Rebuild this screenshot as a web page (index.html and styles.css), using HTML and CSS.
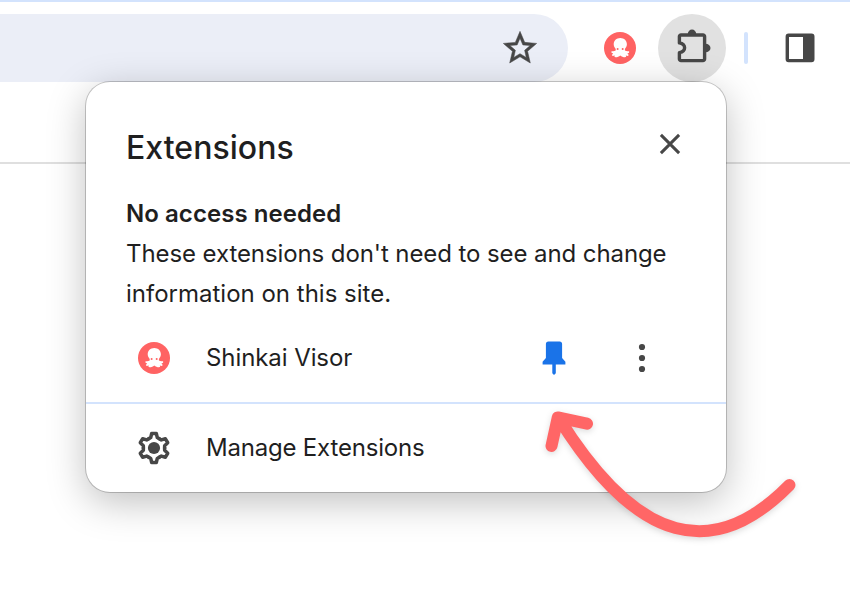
FILE: index.html
```html
<!DOCTYPE html>
<html lang="en">
<head>
<meta charset="utf-8">
<title>Extensions</title>
<link rel="stylesheet" href="styles.css">
</head>
<body>
<svg class="defs" aria-hidden="true">
  <symbol id="shinkai" viewBox="0 0 32 32">
    <circle cx="16" cy="16" r="16" fill="#ff6363"/>
    <path fill="#fff" d="M16.300 6c3.900 0 6.600 2.800 6.600 6.300 0 1.900-.8 3.300-2 4.600v1.700c1.300.8 2.500.8 4.200.6v1.500l-1.700.8 1.400 1.400-.9 1-2.100-.5.400 1.300-1.200.6c-1.900-.1-3.400-.8-4.700-1.900-1.300 1.100-2.800 1.800-4.700 1.900l-1.200-.6.4-1.300-2.100.5-.9-1 1.400-1.400-1.700-.8v-1.500c1.700.2 2.900.2 4.200-.6v-1.700c-1.200-1.300-2-2.700-2-4.600C9.700 8.800 12.400 6 16.300 6z"/>
    <circle cx="13.600" cy="17" r="1" fill="#ff6363"/><circle cx="18.700" cy="17" r="1" fill="#ff6363"/>
  </symbol>
</svg>
<div class="browser">
  <header class="toolbar">
    <div class="address">
      <svg class="star" width="40" height="40" viewBox="0 0 24 24"><path fill="#474747" stroke="#474747" stroke-width=".3" d="M22 9.240l-7.190-.620L12 2 9.190 8.630 2 9.240l5.460 4.730L5.820 21 12 17.270 18.180 21l-1.630-7.030L22 9.240zM12 15.400l-3.760 2.270 1-4.280-3.320-2.880 4.380-.38L12 6.100l1.710 4.040 4.380.38-3.320 2.880 1 4.280L12 15.400z"/></svg>
    </div>
    <svg class="ext-icon" width="32" height="32"><use href="#shinkai"/></svg>
    <div class="puzzle">
      <svg width="40" height="40" viewBox="0 0 40 40">
        <path fill="none" stroke="#474747" stroke-width="3.400" stroke-linejoin="round" d="M9 7h22a1.600 1.600 0 0 1 1.600 1.600v22.400a1.600 1.600 0 0 1-1.600 1.600H9a1.600 1.600 0 0 1-1.600-1.600v-6.300c3.300-.6 5.200-2.400 5.200-4.900s-1.900-4.300-5.200-4.900V8.600A1.600 1.600 0 0 1 9 7z"/>
        <path fill="#474747" d="M15.700 6.500a4.300 5 0 0 1 8.600 0zM33.500 15.700a5 4.300 0 0 1 0 8.600z"/>
      </svg>
    </div>
    <div class="separator"></div>
    <svg class="panel-icon" width="30" height="30" viewBox="0 0 30 30"><path fill="#474747" fill-rule="evenodd" d="M3.600.6h22.900a3 3 0 0 1 3 3v22.700a3 3 0 0 1-3 3H3.600a3 3 0 0 1-3-3V3.600a3 3 0 0 1 3-3zM4 4v22h14V4z"/></svg>
  </header>
  <div class="bookmarks"></div>
</div>

<section class="popup">
  <div class="heading">
    <h1>Extensions</h1>
    <svg width="24" height="24" viewBox="0 0 24 24"><path d="M2.900 2.900l18.200 18.200M21.100 2.900L2.900 21.100" stroke="#474747" stroke-width="3"/></svg>
  </div>
  <div class="info">
    <h2>No access needed</h2>
    <p>These extensions don't need to see and change<br><span class="line-end">information on this site.</span></p>
  </div>
  <div class="row extension">
    <svg width="32" height="32"><use href="#shinkai"/></svg>
    <span class="name">Shinkai Visor</span>
    <svg class="pin" width="24" height="34" viewBox="0 0 24 34"><path fill="#1a73e8" d="M6.400.5h11.200c1.600 0 2.500.9 2.500 2.500v14.100l3.300 3.700v2.700h-9.600v8.800L12 34l-1.700-1.700v-8.800H.6v-2.700l3.300-3.700V3C3.900 1.400 4.800.5 6.400.5z"/></svg>
    <svg class="dots" width="8" height="30" viewBox="0 0 8 30" fill="#474747"><circle cx="4" cy="4" r="3.100"/><circle cx="4" cy="15" r="3.100"/><circle cx="4" cy="26" r="3.100"/></svg>
  </div>
  <div class="row manage">
    <svg width="32" height="34" viewBox="-16 -17 32 34" fill="none" stroke="#474747" stroke-width="3.500" stroke-linejoin="round" stroke-linecap="round">
      <path id="tooth" d="M-5.300-9.200L-3.300-10.400-2.300-14.500H2.300L3.300-10.400 5.300-9.200"/>
      <use href="#tooth" transform="rotate(60)"/><use href="#tooth" transform="rotate(120)"/><use href="#tooth" transform="rotate(180)"/><use href="#tooth" transform="rotate(240)"/><use href="#tooth" transform="rotate(300)"/>
      <circle r="6.100" fill="#474747" stroke="none"/>
    </svg>
    <span class="name manage-name">Manage Extensions</span>
  </div>
</section>

<svg class="arrow" width="270" height="150" viewBox="540 400 270 150">
  <path d="M551.500 446l6.300-28.600 29.200 6.300M559 418.500C638 545 714 562 789.500 485" fill="none" stroke="#ff6666" stroke-width="12" stroke-linecap="round" stroke-linejoin="round"/>
</svg>
</body>
</html>
```
FILE: styles.css
```css
* { box-sizing: border-box; }
body {
  margin: 0;
  width: 850px;
  height: 600px;
  overflow: hidden;
  position: relative;
  background: #fff;
  color: #1f1f1f;
  font-family: Inter, "Liberation Sans", sans-serif;
}
svg { display: block; flex: none; }
.defs { position: absolute; width: 0; height: 0; }
.toolbar {
  height: 82px;
  padding-top: 12px;
  border-top: 2px solid #d3e3fd;
  display: flex;
  align-items: center;
}
.address {
  width: 568px;
  height: 68px;
  padding-right: 28px;
  border-radius: 0 34px 34px 0;
  background: #ebeef7;
  display: flex;
  align-items: center;
  justify-content: flex-end;
}
.star { margin-bottom: 1px; }
.ext-icon { margin-left: 36px; }
.puzzle {
  width: 68px;
  height: 68px;
  margin-left: 22px;
  border-radius: 50%;
  background: #e1e1e1;
  display: grid;
  place-items: center;
}
.separator {
  width: 4px;
  height: 32px;
  margin-left: 18px;
  border-radius: 2px;
  background: #d3e3fd;
}
.panel-icon { margin-left: 37px; }
.bookmarks { height: 82px; border-bottom: 2px solid #dfdfdf; }

.popup {
  position: absolute;
  left: 86px;
  top: 82px;
  width: 640px;
  height: 410px;
  border-radius: 24px;
  background: #fff;
  box-shadow: 0 0 0 1px rgba(0, 0, 0, .2), 0 10px 38px rgba(0, 0, 0, .25);
}
.heading {
  height: 112px;
  padding: 18px 44px 0 40px;
  display: flex;
  align-items: center;
  justify-content: space-between;
}
.heading svg { margin-bottom: 6px; }
h1 { margin: 1px 0 0; font-size: 32px; font-weight: 500; line-height: 40px; letter-spacing: .03px; }
.info { height: 120px; padding-left: 40px; font-size: 24px; line-height: 40px; }
h2 { margin: 0; font-size: 24px; font-weight: 600; line-height: 40px; letter-spacing: .05px; }
p { margin: 0; letter-spacing: -.09px; white-space: nowrap; }
.line-end { letter-spacing: 0; }
.row { display: flex; align-items: center; padding-left: 52px; }
.extension { height: 88px; }
.manage { height: 90px; border-top: 2px solid #d3e3fd; }
.name { margin-left: 36px; font-size: 24px; line-height: 40px; letter-spacing: -.08px; white-space: nowrap; }
.manage-name { letter-spacing: -.2px; }
.pin { margin-left: auto; }
.dots { margin: 0 80px 0 72px; }
.arrow { position: absolute; left: 540px; top: 400px; filter: drop-shadow(0 2px 3px rgba(0, 0, 0, .14)); }
```
